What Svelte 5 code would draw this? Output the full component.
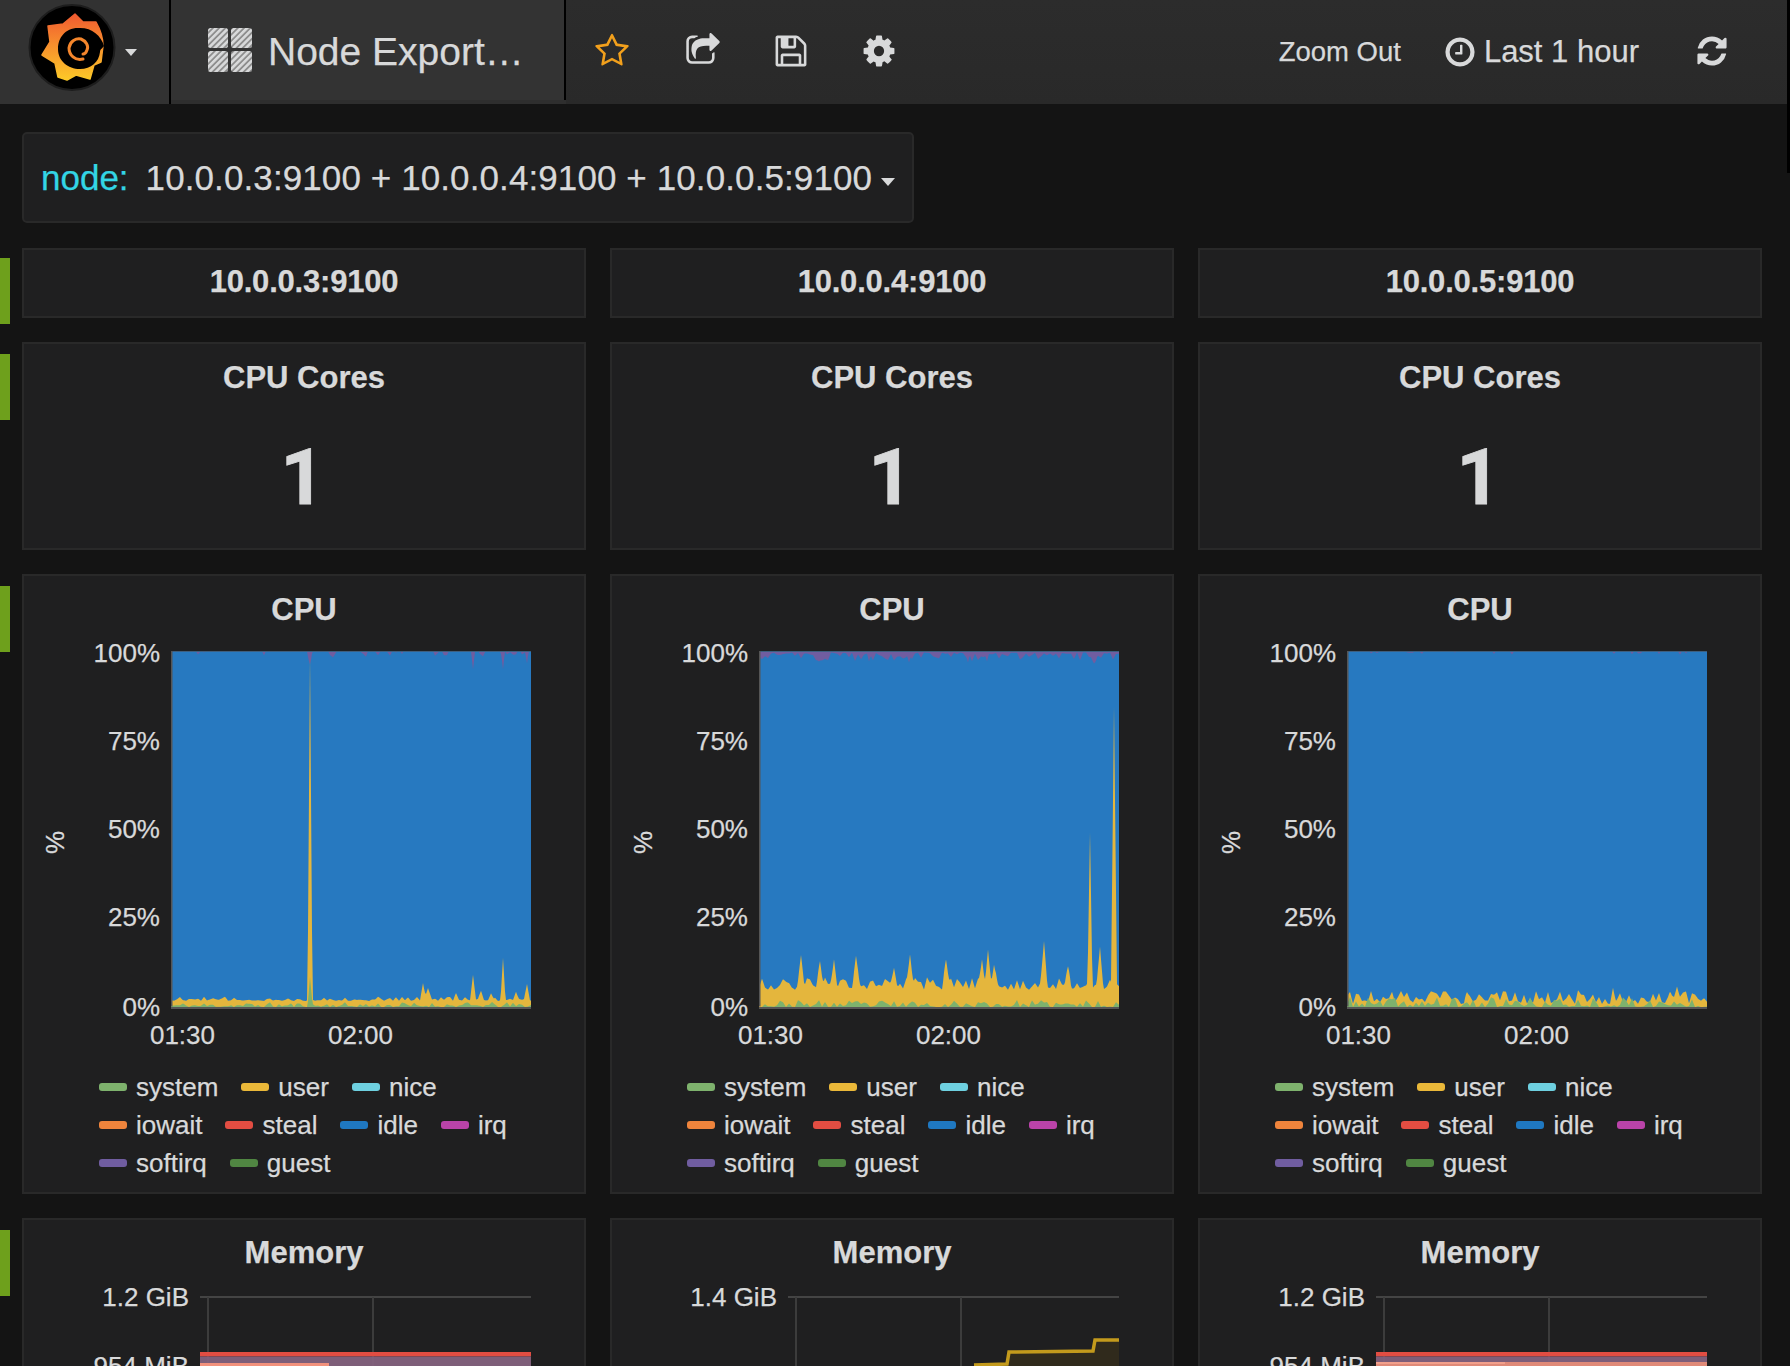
<script>
  const W = 360; // plot width
  const PLOT_H = 355.5;

  const rng = (seed) => () => {
    seed = (seed + 0x6d2b79f5) | 0;
    let t = Math.imul(seed ^ (seed >>> 15), 1 | seed);
    t = (t + Math.imul(t ^ (t >>> 7), 61 | t)) ^ t;
    return ((t ^ (t >>> 14)) >>> 0) / 4294967296;
  };

  // jagged noise, sampled every 3px and joined up
  const noisy = (seed, base, amp, spikes = [], pow = 2) => {
    const r = rng(seed);
    const knots = [];
    for (let i = 0; i <= W / 3 + 1; i++) knots.push(base + amp * Math.pow(r(), pow));
    const out = [];
    for (let x = 0; x <= W; x++) {
      const i = Math.floor(x / 3);
      const f = x / 3 - i;
      let h = knots[i] * (1 - f) + knots[i + 1] * f;
      for (const [sx, sh, sw = 3.5] of spikes) {
        const d = Math.abs(x - sx);
        if (d < sw) h = Math.max(h, sh * (1 - d / sw) + h * (d / sw));
      }
      out.push(Math.max(0, h));
    }
    return out;
  };

  const fromBottom = (heights, lower) => {
    const top = heights.map((h, x) => `${147 + x},${381 - h - (lower ? lower[x] : 0)}`);
    return `M147,381 L${top.join(" ")} L507,381 Z`;
  };
  const fromTop = (heights) => {
    const pts = heights.map((h, x) => `${147 + x},${25.5 + h}`);
    return `M147,25.5 L${pts.join(" ")} L507,25.5 Z`;
  };

  const chart = (seed, user, sys, soft) => {
    const system = noisy(seed, sys[0], sys[1], sys[2] || [], 2);
    const u = noisy(seed + 1, user[0], user[1], user[2] || [], user[3] || 2);
    const softirq = noisy(seed + 2, soft[0], soft[1], soft[2] || [], soft[3] || 3);
    return {
      sysPath: fromBottom(system),
      userPath: fromBottom(u, system.map((h) => h * 0.2)),
      softPath: fromTop(softirq),
    };
  };

  const cols = [
    {
      host: "10.0.0.3:9100",
      cpu: chart(
        11,
        [6, 4, [[139, 345, 2.5], [332, 49, 2.5], [302, 32, 3], [252, 24, 3], [257, 19, 4], [356, 23, 3], [285, 14, 3], [310, 16, 3], [320, 13, 3], [345, 15, 3]]],
        [0, 5, [[139, 30, 2.5]]],
        [-3, 9, [[139, 13, 3], [332, 18, 2], [302, 18, 2], [356, 12, 2]], 3],
      ),
      memTop: "1.2 GiB",
      memNext: "954 MiB",
      bands: true,
      peachFull: false,
    },
    {
      host: "10.0.0.4:9100",
      cpu: chart(
        23,
        [17, 12, [[42, 51], [61, 45], [75, 47], [97, 50], [135, 38], [151, 52], [187, 47], [223, 47], [229, 57], [235, 42], [285, 65], [309, 40], [331, 174, 2.5], [341, 60], [355, 300, 3]], 1.5],
        [0, 7],
        [1, 9, [[60, 10, 2], [110, 10, 2], [150, 11, 2], [209, 11, 2], [228, 10, 2], [335, 12, 3]], 1.6],
      ),
      memTop: "1.4 GiB",
      memNext: "",
      bands: false,
    },
    {
      host: "10.0.0.5:9100",
      cpu: chart(
        37,
        [3, 13, [[266, 19, 3], [330, 20, 3], [323, 15, 2], [120, 14, 3]], 1.6],
        [0, 10],
        [-2, 5, [], 4],
      ),
      memTop: "1.2 GiB",
      memNext: "954 MiB",
      bands: true,
      peachFull: true,
    },
  ];

  const legend = [
    { name: "system", color: "#7eb26d" },
    { name: "user", color: "#eab839" },
    { name: "nice", color: "#6ed0e0" },
    { name: "iowait", color: "#ef843c" },
    { name: "steal", color: "#e24d42" },
    { name: "idle", color: "#1f78c1" },
    { name: "irq", color: "#ba43a9" },
    { name: "softirq", color: "#705da0" },
    { name: "guest", color: "#508642" },
  ];

  const yTicks = [
    ["100%", 27],
    ["75%", 115],
    ["50%", 203],
    ["25%", 291],
    ["0%", 381],
  ];
</script>

{#snippet fa(d, cls)}
  <svg class={cls} viewBox="0 0 1792 1792" fill="currentColor"><path {d} /></svg>
{/snippet}

<div class="page">
  <nav class="nav">
    <div class="logo-btn">
      <svg class="logo" viewBox="0 0 96 96">
        <defs>
          <linearGradient id="gf" x1="0" y1="0" x2="0" y2="1">
            <stop offset="0" stop-color="#f05a30" />
            <stop offset="0.45" stop-color="#f78d2d" />
            <stop offset="1" stop-color="#fcc928" />
          </linearGradient>
        </defs>
        <circle cx="48" cy="43.5" r="42.5" fill="#000" stroke="#1d1d1d" stroke-width="2" />
        <g transform="translate(-24 -4)">
          <path
            fill="url(#gf)"
            stroke="url(#gf)"
            stroke-width="1.5"
            stroke-linejoin="round"
            d="M75 14 L83 22 L96 22 C100 29 103 37 103 46 L101 62 L94 65 L90 79 L76 75 L67 80 L58 77 L55 63 L42 55 L50 42 L48 26 L63 24 Z"
          />
          <path
            fill="#000"
            d="M104 46 C101 35 91 27 78 28 C65 28 58 38 58 49 C58 61 68 69 80 69 C91 69 99 62 100 52 C100 49 103 48 104 46 Z"
          />
          <path
            fill="none"
            stroke="#f5862c"
            stroke-width="3"
            stroke-linecap="round"
            d="M83 59 C75 61 69 55 69 48 C70 41 76 38 81 39 C86 41 89 46 87 50 C86 53 84 54 83 54"
          />
        </g>
      </svg>
      <span class="caret"></span>
    </div>
    <div class="title">
      <svg class="dash-icon" viewBox="0 0 44 44">
        <defs>
          <pattern id="hatch" width="4.4" height="4.4" patternUnits="userSpaceOnUse" patternTransform="rotate(45)">
            <rect width="4.4" height="4.4" fill="#8d8d8d" />
            <rect width="2.6" height="4.4" fill="#d8d9da" />
          </pattern>
        </defs>
        <rect x="0" y="0" width="20" height="20" rx="2.5" fill="url(#hatch)" />
        <rect x="23" y="0" width="21" height="20" rx="2.5" fill="url(#hatch)" />
        <rect x="0" y="23" width="20" height="21" rx="2.5" fill="url(#hatch)" />
        <rect x="23" y="23" width="21" height="21" rx="2.5" fill="url(#hatch)" />
      </svg>
      <span class="dash-name">Node Export…</span>
    </div>
    <div class="tools">
      {@render fa("M1201 1004l306-297-422-62-189-382-189 382-422 62 306 297-73 421 378-199 377 199zm527-357q0 22-26 48l-363 354 86 500q1 7 1 20 0 50-41 50-19 0-40-12l-449-236-449 236q-22 12-40 12-21 0-31.5-14.5t-10.5-35.5q0-6 2-20l86-500-364-354q-25-27-25-48 0-37 56-46l502-73 225-455q19-41 49-41t49 41l225 455 502 73q56 9 56 46z", "tool star")}
      {@render fa("M1472 989v259q0 119-84.5 203.5t-203.5 84.5h-832q-119 0-203.5-84.5t-84.5-203.5v-832q0-119 84.5-203.5t203.5-84.5h255q13 0 22.5 9.5t9.5 22.5q0 27-26 32-77 26-133 60-10 4-16 4h-112q-66 0-113 47t-47 113v832q0 66 47 113t113 47h832q66 0 113-47t47-113v-214q0-19 18-29 28-13 54-37 16-16 35-8 21 9 21 29zm237-496l-384 384q-18 19-45 19-12 0-25-5-39-17-39-59v-192h-160q-323 0-438 131-119 137-74 473 3 23-20 34-8 2-12 2-16 0-26-13-10-14-21-31t-39.5-68.5-49.5-99.5-38.5-114-17.5-122q0-49 3.5-91t14-90 28-88 47-81.5 68.5-74 94.5-61.5 124.5-48.5 159.5-30.5 196.5-11h160v-192q0-42 39-59 13-5 25-5 26 0 45 19l384 384q19 19 19 45t-19 45z", "tool")}
      {@render fa("M512 1536h768v-384h-768v384zm896 0h128v-896q0-14-10-38.5t-20-34.5l-281-281q-10-10-34-20t-39-10v416q0 40-28 68t-68 28h-576q-40 0-68-28t-28-68v-416h-128v1280h128v-416q0-40 28-68t68-28h832q40 0 68 28t28 68v416zm-384-928v-320q0-13-9.5-22.5t-22.5-9.5h-192q-13 0-22.5 9.5t-9.5 22.5v320q0 13 9.5 22.5t22.5 9.5h192q13 0 22.5-9.5t9.5-22.5zm640 32v928q0 40-28 68t-68 28h-1344q-40 0-68-28t-28-68v-1344q0-40 28-68t68-28h928q40 0 88 20t76 48l280 280q28 28 48 76t20 88z", "tool")}
      {@render fa("M1152 896q0-106-75-181t-181-75-181 75-75 181 75 181 181 75 181-75 75-181zm512-109v222q0 12-8 23t-20 13l-185 28q-19 54-39 91 35 50 107 138 10 12 10 25t-9 23q-27 37-99 108t-94 71q-12 0-26-9l-138-108q-44 23-91 38-16 136-29 186-7 28-36 28h-222q-14 0-24.5-8.5t-11.5-21.5l-28-184q-49-16-90-37l-141 107q-10 9-25 9-14 0-25-11-126-114-165-168-7-10-7-23 0-12 8-23 15-21 51-66.5t54-70.5q-27-50-41-99l-183-27q-13-2-21-12.5t-8-23.5v-222q0-12 8-23t19-13l186-28q14-46 39-92-40-57-107-138-10-12-10-24 0-10 9-23 26-36 98.5-107.5t94.5-71.5q13 0 26 10l138 107q44-23 91-38 16-136 29-186 7-28 36-28h222q14 0 24.5 8.5t11.5 21.5l28 184q49 16 90 37l142-107q9-9 24-9 13 0 25 10 129 119 165 170 7 8 7 22 0 12-8 23-15 21-51 66.5t-54 70.5q26 50 41 98l183 28q13 2 21 12.5t8 23.5z", "tool")}
    </div>
    <div class="right">
      <span class="zoom">Zoom Out</span>
      <span class="range">
        {@render fa("M1024 544v448q0 14-9 23t-23 9h-320q-14 0-23-9t-9-23v-64q0-14 9-23t23-9h224v-352q0-14 9-23t23-9h64q14 0 23 9t9 23zm416 352q0-148-73-273t-198-198-273-73-273 73-198 198-73 273 73 273 198 198 273 73 273-73 198-198 73-273zm224 0q0 209-103 385.5t-279.5 279.5-385.5 103-385.5-103-279.5-279.5-103-385.5 103-385.5 279.5-279.5 385.5-103 385.5 103 279.5 279.5 103 385.5z", "clock")}
        Last 1 hour
      </span>
      {@render fa("M1639 1056q0 5-1 7-64 268-268 434.5t-478 166.5q-146 0-282.5-55t-243.5-157l-129 129q-19 19-45 19t-45-19-19-45v-448q0-26 19-45t45-19h448q26 0 45 19t19 45-19 45l-137 137q71 66 161 102t187 36q134 0 250-65t186-179q11-17 53-117 8-23 30-23h192q13 0 22.5 9.5t9.5 22.5zm25-800v448q0 26-19 45t-45 19h-448q-26 0-45-19t-19-45 19-45l138-138q-148-137-349-137-134 0-250 65t-186 179q-11 17-53 117-8 23-30 23h-199q-13 0-22.5-9.5t-9.5-22.5v-7q65-268 270-434.5t480-166.5q146 0 284 55.5t245 156.5l130-129q19-19 45-19t45 19 19 45z", "refresh")}
    </div>
  </nav>
  <div class="scroll-thumb"></div>

  <div class="var-box">
    <span class="var-label">node:</span>
    <span class="var-value">10.0.0.3:9100 + 10.0.0.4:9100 + 10.0.0.5:9100</span>
    <span class="var-caret"></span>
  </div>

  <section class="row">
    <div class="handle"></div>
    {#each cols as c}
      <div class="panel host"><h2>{c.host}</h2></div>
    {/each}
  </section>

  <section class="row">
    <div class="handle"></div>
    {#each cols as c}
      <div class="panel stat">
        <h2>CPU Cores</h2>
        <div class="big">1</div>
      </div>
    {/each}
  </section>

  <section class="row">
    <div class="handle"></div>
    {#each cols as c}
      <div class="panel graph">
        <h2>CPU</h2>
        <svg class="plot" width="560" height="428">
          <rect x="147" y="25.5" width={W} height={PLOT_H} fill="#2779c0" />
          <path d={c.cpu.softPath} fill="#705da0" />
          <path d={c.cpu.userPath} fill="#eab839" opacity="0.97" />
          <path d={c.cpu.sysPath} fill="#7eb26d" />
          <rect x="147" y="25" width={W} height="1" fill="#3d5f80" />
          <rect x="147" y="381" width={W} height="2" fill="#555" />
          <rect x="147" y="25" width="1.5" height={PLOT_H} fill="#555" />
          {#each yTicks as [label, y]}
            <text class="tick" x="136" y={y + 9} text-anchor="end">{label}</text>
          {/each}
          <text class="tick" x="158.5" y="418" text-anchor="middle">01:30</text>
          <text class="tick" x="336.5" y="418" text-anchor="middle">02:00</text>
          <text class="tick" transform="translate(40 216.5) rotate(-90)" text-anchor="middle">%</text>
        </svg>
        <div class="legend">
          {#each legend as l}
            <span class="item">
              <i style="background:{l.color}"></i>{l.name}
            </span>
          {/each}
        </div>
      </div>
    {/each}
  </section>

  <section class="row">
    <div class="handle"></div>
    {#each cols as c}
      <div class="panel graph mem">
        <h2>Memory</h2>
        <svg class="plot" width="560" height="100">
          <rect x="176" y="26" width="331" height="2" fill="#444" />
          <rect x="183" y="27" width="2" height="73" fill="#3c3c3c" />
          <rect x="348" y="27" width="2" height="73" fill="#3c3c3c" />
          {#if c.bands}
            <rect x="176" y="82" width="331" height="4.5" fill="#e24d42" />
            <rect x="176" y="86.5" width="331" height="14" fill="#84627e" opacity="0.95" />
            {#if c.peachFull}
              <rect x="176" y="92" width="331" height="8" fill="#e08a78" />
              <rect x="176" y="92" width="129" height="2" fill="#f2a08c" />
            {:else}
              <rect x="176" y="93" width="129" height="7" fill="#f2917c" />
            {/if}
          {:else}
            <path d="M362,100 L362,95 L395,94 L397,82 L481,81 L483,70 L507,70 L507,100 Z" fill="#302a1c" />
            <path d="M362,95 L395,94 L397,82 L481,81 L483,70 L507,70" fill="none" stroke="#c39a1c" stroke-width="3.5" />
          {/if}
          <text class="tick" x="165" y="36" text-anchor="end">{c.memTop}</text>
          {#if c.memNext}
            <text class="tick" x="165" y="105" text-anchor="end">{c.memNext}</text>
          {/if}
        </svg>
      </div>
    {/each}
  </section>
</div>

<style>
  :global(body) {
    margin: 0;
    background: #141414;
  }

  .page {
    position: relative;
    height: 1366px;
    overflow: hidden;
    background: #141414;
    color: #d8d9da;
    font-family: "Liberation Sans", Arial, sans-serif;
    -webkit-text-stroke: 0.25px currentColor;
  }

  .nav {
    display: flex;
    height: 104px;
    background: linear-gradient(#2c2c2c, #292929);
  }

  .logo-btn {
    display: flex;
    align-items: center;
    box-sizing: border-box;
    width: 171px;
    padding-left: 24px;
    background: #323232;
    border-right: 2px solid #000;
  }

  .logo {
    width: 96px;
    height: 96px;
    flex: none;
  }

  .caret {
    margin-left: 5px;
    border-left: 6.5px solid transparent;
    border-right: 6.5px solid transparent;
    border-top: 7px solid #d8d9da;
  }

  .title {
    display: flex;
    align-items: center;
    box-sizing: border-box;
    width: 395px;
    height: 100px;
    padding-left: 37px;
    background: #333;
    border-right: 2px solid #000;
    font-size: 39px;
    box-shadow: 0 4px 0 #2e2e2e;
  }

  .dash-name {
    margin-top: 4px;
  }

  .dash-icon {
    width: 44px;
    height: 44px;
    margin-right: 16px;
    flex: none;
  }

  .tools {
    display: flex;
    align-items: center;
    gap: 52px;
    padding-left: 28px;
    height: 102px;
  }

  .tools :global(.tool) {
    width: 36px;
    height: 36px;
    color: #d8d9da;
  }

  .tools :global(.star) {
    margin-right: 3px;
    color: #f2a01c;
  }

  .right {
    display: flex;
    align-items: center;
    margin-left: auto;
    padding-right: 61px;
    font-size: 27.5px;
  }

  .zoom {
    margin-right: 42px;
  }

  .range {
    display: flex;
    align-items: center;
    font-size: 31px;
    margin-right: 56px;
  }

  .range :global(.clock) {
    width: 34px;
    height: 34px;
    margin-right: 7px;
  }

  .right :global(.refresh) {
    width: 34px;
    height: 34px;
    margin-top: -2px;
  }

  .scroll-thumb {
    position: absolute;
    top: 0;
    right: 0;
    width: 3px;
    height: 173px;
    background: #000;
  }

  .var-box {
    display: flex;
    align-items: center;
    box-sizing: border-box;
    width: 892px;
    height: 91px;
    margin: 28px 0 25px 22px;
    padding-left: 17px;
    background: #1f1f20;
    border: 2px solid #292929;
    border-radius: 5px;
    font-size: 35px;
  }

  .var-label {
    color: #33d5e5;
    margin-right: 17px;
  }

  .var-value {
    letter-spacing: 0.1px;
  }

  .var-caret {
    margin: 8px 0 0 9px;
    border-left: 7.5px solid transparent;
    border-right: 7.5px solid transparent;
    border-top: 8px solid #d8d9da;
  }

  .row {
    display: flex;
    align-items: flex-start;
    gap: 24px;
    margin-bottom: 24px;
  }

  .handle {
    flex: none;
    width: 10px;
    height: 66px;
    margin: 12px -12px -12px 0;
    background: #6ea01c;
  }

  .row:first-of-type .handle {
    margin-top: 10px;
  }

  .panel {
    flex: none;
    box-sizing: border-box;
    width: 564px;
    background: #1f1f20;
    border: 2px solid #292929;
  }

  h2 {
    margin: 0;
    font-size: 31px;
    line-height: 36px;
    font-weight: 700;
    text-align: center;
  }

  .host {
    height: 70px;
    padding-top: 14px;
  }

  .host h2 {
    letter-spacing: -0.2px;
  }

  .stat {
    height: 208px;
    padding-top: 16px;
  }

  .big {
    margin: 32px 3px 0 0;
    font-family: Roboto, "Liberation Sans", sans-serif;
    font-size: 77px;
    line-height: 100px;
    font-weight: 700;
    text-align: center;
    -webkit-text-stroke: 0.8px currentColor;
  }

  .graph {
    padding-top: 16px;
  }

  .mem {
    height: 400px;
    padding-top: 15px;
  }

  .graph .plot {
    margin-top: -2px;
  }

  .mem .plot {
    margin-top: -1px;
  }

  .plot {
    display: block;
  }

  .tick {
    font-size: 26px;
    fill: #d8d9da;
    stroke: #d8d9da;
    stroke-width: 0.25px;
  }

  .legend {
    display: flex;
    flex-wrap: wrap;
    box-sizing: border-box;
    padding: 14px 34px 10px 75px;
    column-gap: 23px;
    font-size: 26px;
    line-height: 38px;
  }

  .item {
    display: flex;
    align-items: center;
  }

  .item i {
    width: 28px;
    height: 8px;
    margin-right: 9px;
    border-radius: 3px;
  }
</style>
